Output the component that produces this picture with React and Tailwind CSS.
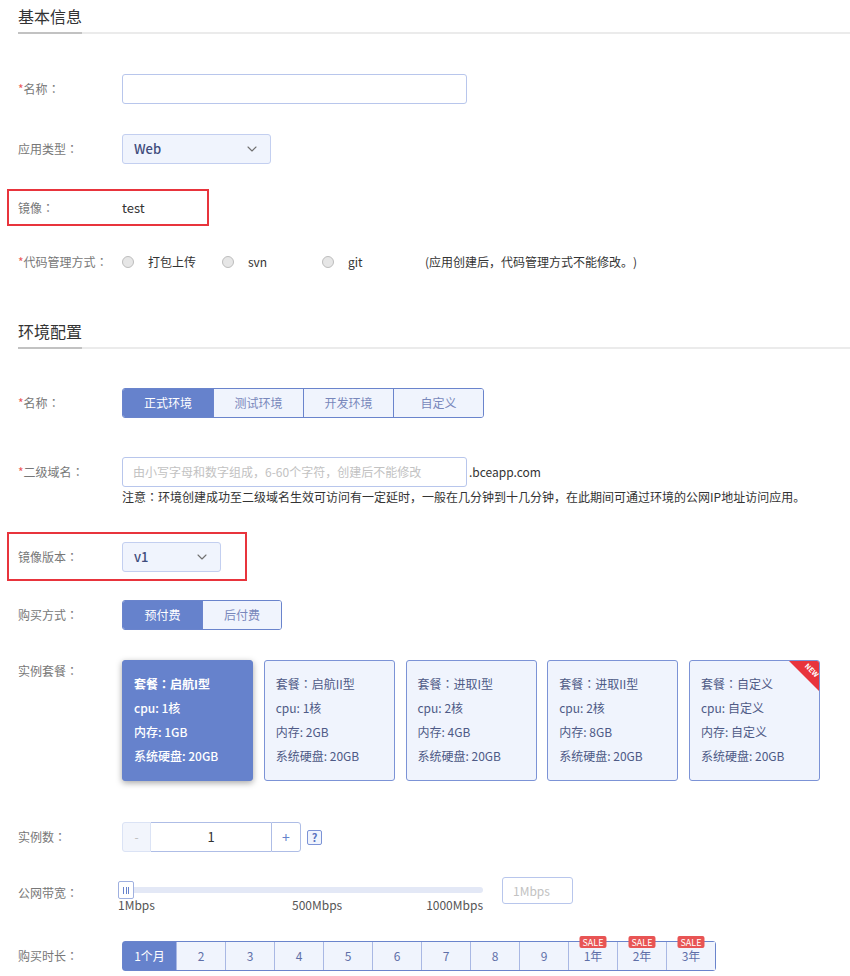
import React from 'react';
import { ChevronDown } from 'lucide-react';

// colon is centered in the TC face, like the reference
const Colon = () => <span className="font-['Noto_Sans_CJK_TC',sans-serif]">：</span>;

const Label = ({ req, children }) => (
  <div className="w-[104px] shrink-0 text-[12px] text-[#777]">
    {req && <span className="text-[#ec5b5b]">*</span>}
    {children}
    <Colon />
  </div>
);

const SectionTitle = ({ title, className = '' }) => (
  <div className={className}>
    <div className="h-[32px] flex items-center text-[16px] text-[#333]">{title}</div>
    <div className="flex h-[2px]">
      <div className="w-[64px] bg-[#c2c2c2]" />
      <div className="flex-1 bg-[#ebebeb]" />
    </div>
  </div>
);

const Select = ({ value, width }) => (
  <div className={`${width} h-[30px] flex items-center justify-between pl-[11px] pr-[10px] bg-[#f0f4fd] border border-[#c3cff0] rounded-[3px]`}>
    <span className="text-[13px] text-[#3f4c7c] font-medium">{value}</span>
    <ChevronDown size={16} strokeWidth={1.6} className="text-[#707070]" />
  </div>
);

const Tabs = ({ items, cellWidth }) => (
  <div className="flex h-[30px] border border-[#6a84cc] rounded-[3px] overflow-hidden">
    {items.map((t, i) => (
      <div key={t}
        className={`${cellWidth} flex items-center justify-center text-[12px] ${i > 0 ? 'border-l border-[#6a84cc]' : ''} ${i === 0 ? 'bg-[#6682cc] text-white' : 'bg-[#f0f4fd] text-[#7887bb]'}`}>
        {t}
      </div>
    ))}
  </div>
);

const Radio = ({ label, width }) => (
  <div className={`${width} flex items-center`}>
    <span className="w-[12px] h-[12px] rounded-full border border-[#bdbdbd] bg-[#e6e6e6]" />
    <span className="ml-[14px] text-[12px] text-[#333]">{label}</span>
  </div>
);

const packages = [
  { name: '启航I型', cpu: '1核', mem: '1GB', disk: '20GB' },
  { name: '启航II型', cpu: '1核', mem: '2GB', disk: '20GB' },
  { name: '进取I型', cpu: '2核', mem: '4GB', disk: '20GB' },
  { name: '进取II型', cpu: '2核', mem: '8GB', disk: '20GB' },
  { name: '自定义', cpu: '自定义', mem: '自定义', disk: '20GB', isNew: true },
];

const durations = ['1个月', '2', '3', '4', '5', '6', '7', '8', '9', '1年', '2年', '3年'];

const App = () => {
  return (
    <div className="w-[850px] h-[976px] bg-white overflow-hidden pl-[18px] font-['Noto_Sans_CJK_SC',sans-serif] [text-spacing-trim:space-all]">
      <SectionTitle title="基本信息" />

      {/* 名称 */}
      <div className="mt-[40px] h-[30px] flex items-center">
        <Label req>名称</Label>
        <div className="w-[345px] h-[30px] border border-[#b8c6ec] rounded-[3px] bg-white" />
      </div>

      {/* 应用类型 */}
      <div className="mt-[30px] h-[30px] flex items-center">
        <Label>应用类型</Label>
        <Select value="Web" width="w-[149px]" />
      </div>

      {/* 镜像 */}
      <div className="mt-[25px] ml-[-11px] w-[202px] h-[37px] border-2 border-[#e8343c] flex items-center pl-[9px]">
        <Label>镜像</Label>
        <span className="text-[13px] text-[#333]">test</span>
      </div>

      {/* 代码管理方式 */}
      <div className="mt-[21px] h-[30px] flex items-center">
        <Label req>代码管理方式</Label>
        <Radio label="打包上传" width="w-[100px]" />
        <Radio label="svn" width="w-[100px]" />
        <Radio label="git" width="w-[103px]" />
        <span className="text-[12px] text-[#333]">(应用创建后，代码管理方式不能修改。)</span>
      </div>

      <SectionTitle title="环境配置" className="mt-[38px]" />

      {/* 名称 tabs */}
      <div className="mt-[39px] h-[30px] flex items-center">
        <Label req>名称</Label>
        <Tabs items={['正式环境', '测试环境', '开发环境', '自定义']} cellWidth="w-[90px]" />
      </div>

      {/* 二级域名 */}
      <div className="mt-[39px] h-[30px] flex items-center">
        <Label req>二级域名</Label>
        <div className="w-[345px] h-[30px] border border-[#b8c6ec] rounded-[3px] bg-white flex items-center pl-[10px] text-[12px] text-[#c2c2c2]">
          由小写字母和数字组成，6-60个字符，创建后不能修改
        </div>
        <span className="ml-[2px] text-[12px] text-[#333]">.bceapp.com</span>
      </div>
      <div className="h-[20px] flex items-center pl-[104px] text-[12px] text-[#333]">
        注意<Colon />环境创建成功至二级域名生效可访问有一定延时，一般在几分钟到十几分钟，在此期间可通过环境的公网IP地址访问应用。
      </div>

      {/* 镜像版本 */}
      <div className="mt-[25px] ml-[-11px] w-[240px] h-[49px] border-2 border-[#e8343c] flex items-center pl-[9px]">
        <Label>镜像版本</Label>
        <Select value="v1" width="w-[99px]" />
      </div>

      {/* 购买方式 */}
      <div className="mt-[19px] h-[30px] flex items-center">
        <Label>购买方式</Label>
        <Tabs items={['预付费', '后付费']} cellWidth="w-[79px]" />
      </div>

      {/* 实例套餐 */}
      <div className="mt-[30px] flex items-start">
        <div className="h-[22px] flex items-center">
          <Label>实例套餐</Label>
        </div>
        <div className="flex gap-[10.75px]">
          {packages.map((p, i) => {
            const sel = i === 0;
            return (
              <div key={p.name}
                className={`relative overflow-hidden w-[131px] h-[121px] rounded-[3px] pt-[11px] pl-[11px] text-[12px] leading-[24px] border ${sel ? 'bg-[#6682cc] border-[#6682cc] text-white shadow-[0_2px_6px_rgba(0,0,0,0.35)]' : 'bg-[#f0f4fd] border-[#7c93d6] text-[#4e5a86]'}`}>
                <div className={sel ? 'font-bold' : ''}>套餐<Colon />{p.name}</div>
                <div className={sel ? 'font-medium' : ''}>cpu: {p.cpu}</div>
                <div className={sel ? 'font-medium' : ''}>内存: {p.mem}</div>
                <div className={sel ? 'font-medium' : ''}>系统硬盘: {p.disk}</div>
                {p.isNew && (
                  <>
                    <div className="absolute top-0 right-0 w-[30px] h-[30px] bg-[#e8343c] [clip-path:polygon(0_0,100%_0,100%_100%)]" />
                    <span className="absolute top-[5px] right-[-1px] rotate-45 text-[7px] leading-[8px] font-bold text-white">NEW</span>
                  </>
                )}
              </div>
            );
          })}
        </div>
      </div>

      {/* 实例数 */}
      <div className="mt-[41px] h-[30px] flex items-center">
        <Label>实例数</Label>
        <div className="flex h-[30px]">
          <div className="w-[29px] flex items-center justify-center bg-[#f2f5fc] border border-[#dbe3f5] rounded-l-[3px] text-[12px] text-[#bbb]">-</div>
          <div className="w-[120px] flex items-center justify-center border-y border-[#aebde6] text-[13px] text-[#333]">1</div>
          <div className="w-[30px] flex items-center justify-center border border-[#aebde6] rounded-r-[3px] text-[14px] text-[#6682cc]">+</div>
        </div>
        <div className="ml-[6px] w-[15px] h-[15px] flex items-center justify-center border border-[#7c93d6] rounded-[2px] bg-[#f0f4fd] text-[11px] leading-none font-bold text-[#5a72c0]">?</div>
      </div>

      {/* 公网带宽 */}
      <div className="mt-[25px] flex items-start">
        <div className="h-[32px] flex items-center">
          <Label>公网带宽</Label>
        </div>
        <div className="ml-[-4px] w-[365px] mt-[4px]">
          <div className="relative h-[18px]">
            <div className="absolute left-0 right-0 top-[6px] h-[6px] rounded-full bg-[#e3e8f6]" />
            <div className="absolute left-0 top-0 w-[16px] h-[18px] bg-white border border-[#9fb0e0] rounded-[2px] flex items-center justify-center gap-[1.5px]">
              <span className="w-[1px] h-[7px] bg-[#6682cc]" />
              <span className="w-[1px] h-[7px] bg-[#6682cc]" />
              <span className="w-[1px] h-[7px] bg-[#6682cc]" />
            </div>
          </div>
          <div className="flex text-[12px] leading-[12px] text-[#555]">
            <span className="w-[174px]">1Mbps</span>
            <span>500Mbps</span>
            <span className="ml-auto">1000Mbps</span>
          </div>
        </div>
        <div className="ml-[19px] w-[71px] h-[27px] border border-[#b8c6ec] rounded-[3px] flex items-center pl-[10px] text-[12px] text-[#c2c2c2]">1Mbps</div>
      </div>

      {/* 购买时长 */}
      <div className="mt-[30px] h-[30px] flex items-center">
        <Label>购买时长</Label>
        <div className="flex h-[30px] border border-[#6a84cc] rounded-[3px]">
          {durations.map((d, i) => (
            <div key={d}
              className={`relative flex items-center justify-center text-[12px] ${i === 0 ? 'w-[53px] bg-[#6682cc] text-white' : 'w-[49px] bg-[#f0f4fd] text-[#5f6fa8] border-l border-[#a9b8e4]'}`}>
              {d}
              {d.endsWith('年') && (
                <span className="absolute top-[-6px] left-1/2 -translate-x-1/2 px-[3px] h-[12px] flex items-center rounded-[2px] bg-[#e85454] text-white text-[9px] leading-none">SALE</span>
              )}
            </div>
          ))}
        </div>
      </div>
    </div>
  );
};

export default App;
